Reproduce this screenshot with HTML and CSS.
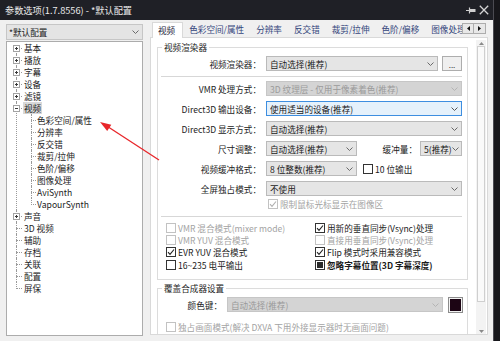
FILE: index.html
```html
<!DOCTYPE html>
<html lang="zh-CN">
<head>
<meta charset="utf-8">
<title>参数选项</title>
<link rel="stylesheet" href="styles.css">
</head>
<body>
<div class="window">
  <div class="titlebar">
    <span class="title">参数选项(1.7.8556) - *默认配置</span>
    <span class="tb-icons">
      <svg class="pin" width="10" height="7" viewBox="0 0 10 7"><path d="M0 3.5h3.5" stroke="#cfcfcf" stroke-width="1"/><path d="M3.5 0.5v6" stroke="#cfcfcf" stroke-width="1.2"/><rect x="4" y="2" width="5.5" height="3" fill="#cfcfcf"/></svg>
      <svg class="close" width="10" height="10" viewBox="0 0 10 10"><path d="M0.8 0.8L9.2 9.2M9.2 0.8L0.8 9.2" stroke="#d4d4d4" stroke-width="1.3"/></svg>
    </span>
  </div>
  <div class="main">
    <div class="leftcol">
      <div class="combo left-combo"><span class="ctext">*默认配置</span><svg class="chev" width="7" height="4" viewBox="0 0 7 4"><path d="M0.5 0.5L3.5 3.5L6.5 0.5" fill="none" stroke="#6a6a6a"/></svg></div>
      <div class="treebox">
        <ul class="tree">
          <li><span class="exp plus"></span><span class="lbl">基本</span></li>
          <li><span class="exp plus"></span><span class="lbl">播放</span></li>
          <li><span class="exp plus"></span><span class="lbl">字幕</span></li>
          <li><span class="exp plus"></span><span class="lbl">设备</span></li>
          <li><span class="exp plus"></span><span class="lbl">滤镜</span></li>
          <li><span class="exp"></span><span class="lbl sel">视频</span>
            <ul>
              <li><span class="lbl">色彩空间/属性</span></li>
              <li><span class="lbl">分辨率</span></li>
              <li><span class="lbl">反交错</span></li>
              <li><span class="lbl">裁剪/拉伸</span></li>
              <li><span class="lbl">色阶/偏移</span></li>
              <li><span class="lbl">图像处理</span></li>
              <li><span class="lbl">AviSynth</span></li>
              <li><span class="lbl">VapourSynth</span></li>
            </ul>
          </li>
          <li><span class="exp plus"></span><span class="lbl">声音</span></li>
          <li><span class="lbl">3D 视频</span></li>
          <li><span class="lbl">辅助</span></li>
          <li><span class="lbl">存档</span></li>
          <li><span class="lbl">关联</span></li>
          <li><span class="lbl">配置</span></li>
          <li><span class="lbl">屏保</span></li>
        </ul>
      </div>
    </div>
    <div class="rightcol">
      <div class="tabbar">
        <div class="tabs">
          <span class="tab active">视频</span>
          <span class="tab">色彩空间/属性</span>
          <span class="tab">分辨率</span>
          <span class="tab">反交错</span>
          <span class="tab">裁剪/拉伸</span>
          <span class="tab">色阶/偏移</span>
          <span class="tab">图像处理</span>
        </div>
        <div class="tabscroll">
          <span class="tsb"><svg width="3" height="5" viewBox="0 0 3 5"><path d="M3 0L0 2.5L3 5z" fill="#111"/></svg></span>
          <span class="tsb"><svg width="3" height="5" viewBox="0 0 3 5"><path d="M0 0L3 2.5L0 5z" fill="#111"/></svg></span>
        </div>
      </div>
      <div class="panel">
        <div class="content">
          <div class="group g1">
            <div class="legend">视频渲染器</div>
            <div class="row row1">
              <span class="lab">视频渲染器：</span>
              <div class="combo w172"><span class="ctext">自动选择(推荐)</span><svg class="chev" width="7" height="4" viewBox="0 0 7 4"><path d="M0.5 0.5L3.5 3.5L6.5 0.5" fill="none" stroke="#6a6a6a"/></svg></div>
              <span class="btn">...</span>
            </div>
            <div class="sep"></div>
            <div class="row rvmr">
              <span class="lab">VMR 处理方式：</span>
              <div class="combo disabled"><span class="ctext">3D 纹理层 - 仅用于像素着色(推荐)</span><svg class="chev" width="7" height="4" viewBox="0 0 7 4"><path d="M0.5 0.5L3.5 3.5L6.5 0.5" fill="none" stroke="#b4b4b4"/></svg></div>
            </div>
            <div class="row">
              <span class="lab">Direct3D 输出设备：</span>
              <div class="combo focus"><span class="ctext">使用适当的设备(推荐)</span><svg class="chev" width="7" height="4" viewBox="0 0 7 4"><path d="M0.5 0.5L3.5 3.5L6.5 0.5" fill="none" stroke="#555"/></svg></div>
            </div>
            <div class="row">
              <span class="lab">Direct3D 显示方式：</span>
              <div class="combo"><span class="ctext">自动选择(推荐)</span><svg class="chev" width="7" height="4" viewBox="0 0 7 4"><path d="M0.5 0.5L3.5 3.5L6.5 0.5" fill="none" stroke="#6a6a6a"/></svg></div>
            </div>
            <div class="row">
              <span class="lab">尺寸调整：</span>
              <div class="combo w91"><span class="ctext">自动选择(推荐)</span><svg class="chev" width="7" height="4" viewBox="0 0 7 4"><path d="M0.5 0.5L3.5 3.5L6.5 0.5" fill="none" stroke="#6a6a6a"/></svg></div>
              <span class="lab2">缓冲量：</span>
              <div class="combo w42"><span class="ctext">5(推荐)</span><svg class="chev" width="7" height="4" viewBox="0 0 7 4"><path d="M0.5 0.5L3.5 3.5L6.5 0.5" fill="none" stroke="#6a6a6a"/></svg></div>
            </div>
            <div class="row">
              <span class="lab">视频缓冲格式：</span>
              <div class="combo w91"><span class="ctext">8 位整数(推荐)</span><svg class="chev" width="7" height="4" viewBox="0 0 7 4"><path d="M0.5 0.5L3.5 3.5L6.5 0.5" fill="none" stroke="#6a6a6a"/></svg></div>
              <span class="cb inline"><span class="box"></span>10 位输出</span>
            </div>
            <div class="row">
              <span class="lab">全屏独占模式：</span>
              <div class="combo"><span class="ctext">不使用</span><svg class="chev" width="7" height="4" viewBox="0 0 7 4"><path d="M0.5 0.5L3.5 3.5L6.5 0.5" fill="none" stroke="#6a6a6a"/></svg></div>
            </div>
            <div class="cb dis limit"><span class="box"><svg width="8" height="8" viewBox="0 0 8 8"><path d="M1 4.2L3 6.3L7 1.5" fill="none" stroke="#b0b0b0" stroke-width="1.1"/></svg></span>限制鼠标光标显示在图像区</div>
            <div class="sep sep2"></div>
            <div class="cbgrid">
              <div class="cb dis"><span class="box"></span>VMR 混合模式(mixer mode)</div>
              <div class="cb"><span class="box"><svg width="8" height="8" viewBox="0 0 8 8"><path d="M1 4.2L3 6.3L7 1.5" fill="none" stroke="#222" stroke-width="1.1"/></svg></span>用新的垂直同步(Vsync)处理</div>
              <div class="cb dis"><span class="box"></span>VMR YUV 混合模式</div>
              <div class="cb dis"><span class="box"></span>直接用垂直同步(Vsync)处理</div>
              <div class="cb"><span class="box"><svg width="8" height="8" viewBox="0 0 8 8"><path d="M1 4.2L3 6.3L7 1.5" fill="none" stroke="#222" stroke-width="1.1"/></svg></span>EVR YUV 混合模式</div>
              <div class="cb"><span class="box"><svg width="8" height="8" viewBox="0 0 8 8"><path d="M1 4.2L3 6.3L7 1.5" fill="none" stroke="#222" stroke-width="1.1"/></svg></span>Flip 模式时采用兼容模式</div>
              <div class="cb"><span class="box"></span>16~235 电平输出</div>
              <div class="cb strong"><span class="box"><span class="ind"></span></span>忽略字幕位置(3D 字幕深度)</div>
            </div>
          </div>
          <div class="group g2">
            <div class="legend">覆盖合成器设置</div>
            <div class="row row1">
              <span class="lab narrow">颜色键：</span>
              <div class="combo disabled w216"><span class="ctext">自动选择(推荐)</span><svg class="chev" width="7" height="4" viewBox="0 0 7 4"><path d="M0.5 0.5L3.5 3.5L6.5 0.5" fill="none" stroke="#b4b4b4"/></svg></div>
              <span class="swatch"><span></span></span>
            </div>
            <div class="cb dis last"><span class="box"></span>独占画面模式(解决 DXVA 下用外接显示器时无画面问题)</div>
          </div>
        </div>
        <div class="vscroll">
          <span class="sbtn"><svg width="5" height="3" viewBox="0 0 5 3"><path d="M0 3L2.5 0L5 3z" fill="#8a8a8a"/></svg></span>
          <div class="thumb"></div>
          <div class="strack"></div>
          <span class="sbtn"><svg width="5" height="3" viewBox="0 0 5 3"><path d="M0 0L2.5 3L5 0z" fill="#8a8a8a"/></svg></span>
        </div>
      </div>
    </div>
  </div>
</div>
<svg class="annot" width="500" height="341" viewBox="0 0 500 341">
  <path d="M159 160L106 125.5" stroke="#e8262a" stroke-width="1.3" fill="none"/>
  <path d="M100 122L111.3 124.8L107.2 131z" fill="#e8262a"/>
</svg>
</body>
</html>
```

FILE: styles.css
```css
* { box-sizing: border-box; }
html, body { margin: 0; padding: 0; }
body {
  width: 500px;
  height: 341px;
  overflow: hidden;
  background: #17171b;
  font-family: "Noto Sans CJK SC", "Noto Sans", sans-serif;
  font-size: 8.6px;
  line-height: 12px;
  color: #1b1b1b;
  display: flex;
  position: relative;
}
.window {
  width: 494px;
  height: 341px;
  background: #f0f0f0;
  border-right: 1px solid #4b4b52;
  display: flex;
  flex-direction: column;
}
.titlebar {
  height: 20px;
  flex: none;
  background: #1f2026;
  color: #ececec;
  display: flex;
  align-items: center;
  padding: 0 4px 0 5px;
  font-size: 9.2px;
}
.title { flex: 1; }
.tb-icons { display: flex; align-items: center; gap: 3px; }
.tb-icons .pin { margin-top: 1px; }

.main {
  display: flex;
  gap: 7px;
  padding: 2px 0 0 6px;
  flex: 1;
  min-height: 0;
}
.leftcol {
  width: 137px;
  flex: none;
  padding-top: 2px;
  display: flex;
  flex-direction: column;
}
.combo {
  height: 15px;
  width: 196px;
  flex: none;
  border: 1px solid #bababa;
  background: #e5e5e5;
  display: flex;
  align-items: center;
  padding: 0 3px 0 3px;
  white-space: nowrap;
  overflow: hidden;
}
.combo .ctext { flex: 1; overflow: hidden; }
.combo .chev { flex: none; }
.combo.disabled { background: #d4d4d4; border-color: #c6c6c6; color: #9a9a9a; }
.combo.focus { background: #e5f1fb; border-color: #3d8ee0; }
.left-combo { width: 137px; height: 16px; background: #e4e4e4; border-color: #c6c6c6; padding-left: 2px; }

.treebox {
  margin-top: 1px;
  height: 295px;
  border: 1px solid #acacac;
  background: #fff;
  padding-left: 9px;
}
.tree, .tree ul { list-style: none; margin: 0; padding: 0; }
.tree li { position: relative; padding-left: 8px; line-height: 12px; white-space: nowrap; }
.tree li::before {
  content: "";
  position: absolute;
  left: 0;
  top: 6px;
  width: 6px;
  border-top: 1px dotted #9a9a9a;
}
.tree li::after {
  content: "";
  position: absolute;
  left: 0;
  top: 0;
  bottom: 0;
  border-left: 1px dotted #9a9a9a;
}
.tree > li:first-child::after { top: 6px; }
.tree li:last-child::after { bottom: auto; height: 7px; }
.tree ul { margin-left: 7px; }
.tree ul li { padding-left: 6px; }
.tree ul li::before { width: 5px; }
.lbl { display: inline-block; padding: 0 1px; margin-left: -1px; }
.lbl.sel { background: #d9d9d9; }
.exp {
  position: absolute;
  left: -3px;
  top: 3px;
  width: 7px;
  height: 7px;
  border: 1px solid #a3a3a3;
  background: #fff;
  z-index: 1;
}
.exp::before {
  content: "";
  position: absolute;
  left: 1px;
  top: 2px;
  width: 3px;
  height: 1px;
  background: #3a3a3a;
}
.exp.plus::after {
  content: "";
  position: absolute;
  left: 2px;
  top: 1px;
  width: 1px;
  height: 3px;
  background: #3a3a3a;
}

.rightcol {
  width: 338px;
  flex: none;
  display: flex;
  flex-direction: column;
}
.tabbar { height: 16px; display: flex; align-items: flex-start; }
.tabs {
  flex: 1;
  min-width: 0;
  height: 16px;
  display: flex;
  overflow: hidden;
  padding-left: 2px;
}
.tab {
  flex: none;
  height: 16px;
  line-height: 15px;
  padding: 0 6px;
  color: #34467c;
  white-space: nowrap;
}
.tab.active {
  background: #fff;
  border: 1px solid #d9d9d9;
  border-bottom: none;
  padding: 0 7px 0 5px;
  color: #24243a;
  position: relative;
  z-index: 1;
}
.tabscroll { display: flex; flex: none; margin: 1px 2px 0 0; }
.tsb {
  width: 12px;
  height: 11px;
  border: 1px solid #adadad;
  background: #e8e8e8;
  display: flex;
  align-items: center;
  justify-content: center;
}
.tsb + .tsb { border-left: none; }

.panel {
  margin-top: -1px;
  height: 298px;
  border: 1px solid #d9d9d9;
  background: #fff;
  display: flex;
}
.content {
  flex: 1;
  min-width: 0;
  overflow: hidden;
  padding: 9px 0 0 6px;
}
.vscroll {
  width: 10px;
  flex: none;
  margin: 2px 1px 0 0;
  display: flex;
  flex-direction: column;
  background: #f3f3f3;
}
.sbtn { height: 6px; display: flex; align-items: center; justify-content: center; flex: none; }
.thumb { height: 256px; margin: 0 1px; border: 1px solid #cfcfcf; background: #fafafa; flex: none; }
.strack { flex: 1; }

.group {
  width: 311px;
  border: 1px solid #dcdcdc;
  padding: 0 5px 7px 0;
}
.g2 { margin-top: 8px; }
.legend {
  display: table;
  margin: -7px 0 0 4px;
  padding: 0 2px;
  background: #fff;
  line-height: 13px;
}
.row { display: flex; align-items: center; height: 15px; margin-top: 5px; white-space: nowrap; }
.row.row1 { margin-top: 2px; }
.row.rvmr { margin-top: 4px; }
.lab { width: 103px; flex: none; text-align: right; margin-right: 5px; }
.lab.narrow { width: 64px; }
.lab2 { margin-left: auto; margin-right: 3px; }
.combo.w172 { width: 172px; }
.combo.w91 { width: 91px; }
.combo.w42 { width: 42px; padding-right: 2px; }
.combo.w216 { width: 216px; }
.btn {
  width: 20px;
  height: 15px;
  margin-left: 4px;
  border: 1px solid #adadad;
  background: #efefef;
  display: flex;
  align-items: flex-end;
  justify-content: center;
  line-height: 11px;
  font-size: 8px;
  color: #333;
}
.sep { height: 1px; background: #d7d7d7; margin: 5px 0 0 3px; }
.sep.sep2 { margin-top: 6px; }

.cb { display: flex; align-items: center; height: 12px; white-space: nowrap; }
.cb.inline { margin-left: 6px; }
.box {
  width: 10px;
  height: 10px;
  flex: none;
  border: 1px solid #333;
  background: #fff;
  margin-right: 2px;
  display: flex;
  align-items: center;
  justify-content: center;
}
.cb.dis { color: #a3a3a3; }
.cb.dis .box { border-color: #c2c2c2; }
.cb.strong { font-weight: 700; }
.ind { width: 6px; height: 6px; background: #2a2a2a; }
.limit { margin: 2px 0 0 110px; }
.cbgrid {
  display: grid;
  grid-template-columns: 149px auto;
  grid-template-rows: 12px 12px 13px 13px;
  margin: 5px 0 0 8px;
}
.swatch {
  width: 15px;
  height: 16px;
  margin-left: 5px;
  border: 1px solid #8c8c8c;
  padding: 1px;
  background: #f2f2f2;
  flex: none;
}
.swatch span { display: block; width: 100%; height: 100%; background: #1c0514; }
.last { margin: 9px 0 0 8px; }

.annot { position: absolute; left: 0; top: 0; pointer-events: none; }
```
